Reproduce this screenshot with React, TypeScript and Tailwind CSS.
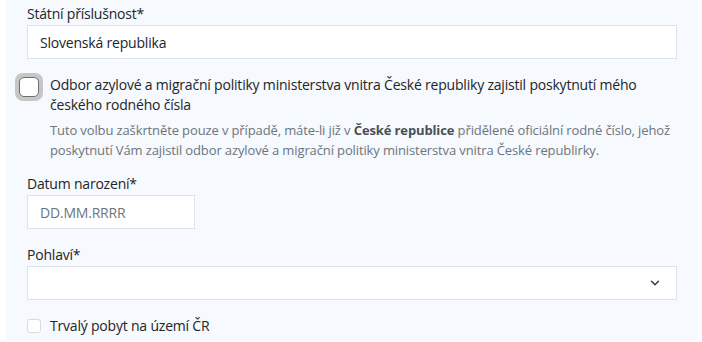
import { ChevronDown } from 'lucide-react';

const font = { fontFamily: '"Open Sans", "Noto Sans", sans-serif' };

export default function App() {
  return (
    <div className="w-[702px] h-[342px] bg-white" style={font}>
      <div className="ml-[6px] mr-[4px] h-[340px] bg-[#f6f9fd] pl-[21px] pr-[21px] pt-[4px] text-[#212529] tracking-[-0.2px]">
        {/* Státní příslušnost */}
        <label className="block text-[14px] leading-[20px]">Státní příslušnost*</label>
        <div className="mt-[1px] h-[34px] border border-[#dde2e7] bg-white px-[12px] flex items-center text-[14px]">
          Slovenská republika
        </div>

        {/* Rodné číslo checkbox */}
        <div className="mt-[16px] flex">
          <div className="-ml-[12px] mt-[-2px] w-[28px] h-[28px] shrink-0 rounded-[8px] bg-[#c6c6c6] p-[4px]">
            <div className="w-full h-full rounded-[5px] border border-[#6f6f6f] bg-white" />
          </div>
          <div className="ml-[7px]">
            <p className="text-[14px] leading-[20px]">
              Odbor azylové a migrační politiky ministerstva vnitra České republiky zajistil poskytnutí mého českého rodného čísla
            </p>
            <p className="mt-[5px] text-[13px] leading-[20px] tracking-[-0.12px] text-[#6c757d]">
              Tuto volbu zaškrtněte pouze v případě, máte-li již v <b className="font-bold text-[#495057]">České republice</b> přidělené oficiální rodné číslo, jehož poskytnutí Vám zajistil odbor azylové a migrační politiky ministerstva vnitra České republirky.
            </p>
          </div>
        </div>

        {/* Datum narození */}
        <label className="mt-[14px] block text-[14px] leading-[20px]">Datum narození*</label>
        <div className="mt-[1px] w-[168px] h-[34px] border border-[#dde2e7] bg-white px-[12px] flex items-center text-[14px] text-[#6c757d]">
          DD.MM.RRRR
        </div>

        {/* Pohlaví */}
        <label className="mt-[16px] block text-[14px] leading-[20px]">Pohlaví*</label>
        <div className="mt-[1px] h-[34px] border border-[#dde2e7] bg-white px-[14px] flex items-center justify-end">
          <ChevronDown size={14} strokeWidth={2.5} className="text-[#343a40]" />
        </div>

        {/* Trvalý pobyt */}
        <div className="mt-[16px] flex items-center">
          <div className="w-[14px] h-[14px] rounded-[3px] border border-[#d5dae0] bg-white" />
          <span className="ml-[9px] text-[14px] leading-[20px]">Trvalý pobyt na území ČR</span>
        </div>
      </div>
    </div>
  );
}
